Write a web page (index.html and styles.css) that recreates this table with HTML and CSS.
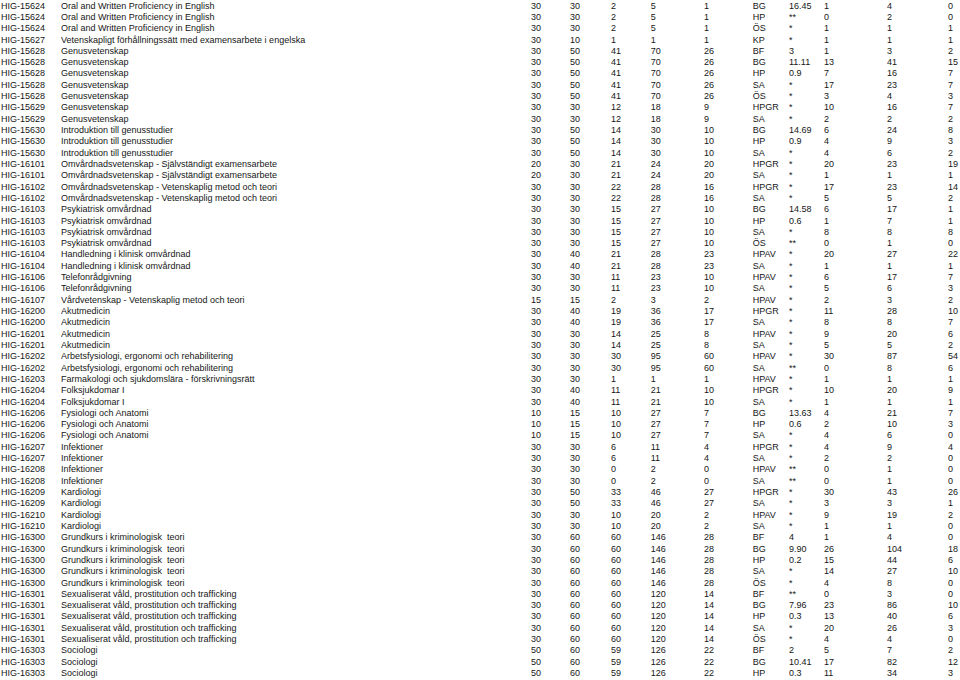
FILE: index.html
```html
<!DOCTYPE html>
<html lang="sv">
<head>
<meta charset="utf-8">
<title>Kursresultat</title>
<link rel="stylesheet" href="styles.css">
</head>
<body>
<table class="grid">
<colgroup>
<col class="c-code"><col class="c-name"><col class="c-n1"><col class="c-n2"><col class="c-n3"><col class="c-n4"><col class="c-n5"><col class="c-grp"><col class="c-val"><col class="c-a"><col class="c-b"><col class="c-c">
</colgroup>
<tbody>
<tr><td>HIG-15624</td><td>Oral and Written Proficiency in English</td><td>30</td><td>30</td><td>2</td><td>5</td><td>1</td><td>BG</td><td>16.45</td><td>1</td><td>4</td><td>0</td></tr>
<tr><td>HIG-15624</td><td>Oral and Written Proficiency in English</td><td>30</td><td>30</td><td>2</td><td>5</td><td>1</td><td>HP</td><td>**</td><td>0</td><td>2</td><td>0</td></tr>
<tr><td>HIG-15624</td><td>Oral and Written Proficiency in English</td><td>30</td><td>30</td><td>2</td><td>5</td><td>1</td><td>ÖS</td><td>*</td><td>1</td><td>1</td><td>1</td></tr>
<tr><td>HIG-15627</td><td>Vetenskapligt förhållningssätt med examensarbete i engelska</td><td>30</td><td>10</td><td>1</td><td>1</td><td>1</td><td>KP</td><td>*</td><td>1</td><td>1</td><td>1</td></tr>
<tr><td>HIG-15628</td><td>Genusvetenskap</td><td>30</td><td>50</td><td>41</td><td>70</td><td>26</td><td>BF</td><td>3</td><td>1</td><td>3</td><td>2</td></tr>
<tr><td>HIG-15628</td><td>Genusvetenskap</td><td>30</td><td>50</td><td>41</td><td>70</td><td>26</td><td>BG</td><td>11.11</td><td>13</td><td>41</td><td>15</td></tr>
<tr><td>HIG-15628</td><td>Genusvetenskap</td><td>30</td><td>50</td><td>41</td><td>70</td><td>26</td><td>HP</td><td>0.9</td><td>7</td><td>16</td><td>7</td></tr>
<tr><td>HIG-15628</td><td>Genusvetenskap</td><td>30</td><td>50</td><td>41</td><td>70</td><td>26</td><td>SA</td><td>*</td><td>17</td><td>23</td><td>7</td></tr>
<tr><td>HIG-15628</td><td>Genusvetenskap</td><td>30</td><td>50</td><td>41</td><td>70</td><td>26</td><td>ÖS</td><td>*</td><td>3</td><td>4</td><td>3</td></tr>
<tr><td>HIG-15629</td><td>Genusvetenskap</td><td>30</td><td>30</td><td>12</td><td>18</td><td>9</td><td>HPGR</td><td>*</td><td>10</td><td>16</td><td>7</td></tr>
<tr><td>HIG-15629</td><td>Genusvetenskap</td><td>30</td><td>30</td><td>12</td><td>18</td><td>9</td><td>SA</td><td>*</td><td>2</td><td>2</td><td>2</td></tr>
<tr><td>HIG-15630</td><td>Introduktion till genusstudier</td><td>30</td><td>50</td><td>14</td><td>30</td><td>10</td><td>BG</td><td>14.69</td><td>6</td><td>24</td><td>8</td></tr>
<tr><td>HIG-15630</td><td>Introduktion till genusstudier</td><td>30</td><td>50</td><td>14</td><td>30</td><td>10</td><td>HP</td><td>0.9</td><td>4</td><td>9</td><td>3</td></tr>
<tr><td>HIG-15630</td><td>Introduktion till genusstudier</td><td>30</td><td>50</td><td>14</td><td>30</td><td>10</td><td>SA</td><td>*</td><td>4</td><td>6</td><td>2</td></tr>
<tr><td>HIG-16101</td><td>Omvårdnadsvetenskap - Självständigt examensarbete</td><td>20</td><td>30</td><td>21</td><td>24</td><td>20</td><td>HPGR</td><td>*</td><td>20</td><td>23</td><td>19</td></tr>
<tr><td>HIG-16101</td><td>Omvårdnadsvetenskap - Självständigt examensarbete</td><td>20</td><td>30</td><td>21</td><td>24</td><td>20</td><td>SA</td><td>*</td><td>1</td><td>1</td><td>1</td></tr>
<tr><td>HIG-16102</td><td>Omvårdnadsvetenskap - Vetenskaplig metod och teori</td><td>30</td><td>30</td><td>22</td><td>28</td><td>16</td><td>HPGR</td><td>*</td><td>17</td><td>23</td><td>14</td></tr>
<tr><td>HIG-16102</td><td>Omvårdnadsvetenskap - Vetenskaplig metod och teori</td><td>30</td><td>30</td><td>22</td><td>28</td><td>16</td><td>SA</td><td>*</td><td>5</td><td>5</td><td>2</td></tr>
<tr><td>HIG-16103</td><td>Psykiatrisk omvårdnad</td><td>30</td><td>30</td><td>15</td><td>27</td><td>10</td><td>BG</td><td>14.58</td><td>6</td><td>17</td><td>1</td></tr>
<tr><td>HIG-16103</td><td>Psykiatrisk omvårdnad</td><td>30</td><td>30</td><td>15</td><td>27</td><td>10</td><td>HP</td><td>0.6</td><td>1</td><td>7</td><td>1</td></tr>
<tr><td>HIG-16103</td><td>Psykiatrisk omvårdnad</td><td>30</td><td>30</td><td>15</td><td>27</td><td>10</td><td>SA</td><td>*</td><td>8</td><td>8</td><td>8</td></tr>
<tr><td>HIG-16103</td><td>Psykiatrisk omvårdnad</td><td>30</td><td>30</td><td>15</td><td>27</td><td>10</td><td>ÖS</td><td>**</td><td>0</td><td>1</td><td>0</td></tr>
<tr><td>HIG-16104</td><td>Handledning i klinisk omvårdnad</td><td>30</td><td>40</td><td>21</td><td>28</td><td>23</td><td>HPAV</td><td>*</td><td>20</td><td>27</td><td>22</td></tr>
<tr><td>HIG-16104</td><td>Handledning i klinisk omvårdnad</td><td>30</td><td>40</td><td>21</td><td>28</td><td>23</td><td>SA</td><td>*</td><td>1</td><td>1</td><td>1</td></tr>
<tr><td>HIG-16106</td><td>Telefonrådgivning</td><td>30</td><td>30</td><td>11</td><td>23</td><td>10</td><td>HPAV</td><td>*</td><td>6</td><td>17</td><td>7</td></tr>
<tr><td>HIG-16106</td><td>Telefonrådgivning</td><td>30</td><td>30</td><td>11</td><td>23</td><td>10</td><td>SA</td><td>*</td><td>5</td><td>6</td><td>3</td></tr>
<tr><td>HIG-16107</td><td>Vårdvetenskap - Vetenskaplig metod och teori</td><td>15</td><td>15</td><td>2</td><td>3</td><td>2</td><td>HPAV</td><td>*</td><td>2</td><td>3</td><td>2</td></tr>
<tr><td>HIG-16200</td><td>Akutmedicin</td><td>30</td><td>40</td><td>19</td><td>36</td><td>17</td><td>HPGR</td><td>*</td><td>11</td><td>28</td><td>10</td></tr>
<tr><td>HIG-16200</td><td>Akutmedicin</td><td>30</td><td>40</td><td>19</td><td>36</td><td>17</td><td>SA</td><td>*</td><td>8</td><td>8</td><td>7</td></tr>
<tr><td>HIG-16201</td><td>Akutmedicin</td><td>30</td><td>30</td><td>14</td><td>25</td><td>8</td><td>HPAV</td><td>*</td><td>9</td><td>20</td><td>6</td></tr>
<tr><td>HIG-16201</td><td>Akutmedicin</td><td>30</td><td>30</td><td>14</td><td>25</td><td>8</td><td>SA</td><td>*</td><td>5</td><td>5</td><td>2</td></tr>
<tr><td>HIG-16202</td><td>Arbetsfysiologi, ergonomi och rehabilitering</td><td>30</td><td>30</td><td>30</td><td>95</td><td>60</td><td>HPAV</td><td>*</td><td>30</td><td>87</td><td>54</td></tr>
<tr><td>HIG-16202</td><td>Arbetsfysiologi, ergonomi och rehabilitering</td><td>30</td><td>30</td><td>30</td><td>95</td><td>60</td><td>SA</td><td>**</td><td>0</td><td>8</td><td>6</td></tr>
<tr><td>HIG-16203</td><td>Farmakologi och sjukdomslära - förskrivningsrätt</td><td>30</td><td>30</td><td>1</td><td>1</td><td>1</td><td>HPAV</td><td>*</td><td>1</td><td>1</td><td>1</td></tr>
<tr><td>HIG-16204</td><td>Folksjukdomar I</td><td>30</td><td>40</td><td>11</td><td>21</td><td>10</td><td>HPGR</td><td>*</td><td>10</td><td>20</td><td>9</td></tr>
<tr><td>HIG-16204</td><td>Folksjukdomar I</td><td>30</td><td>40</td><td>11</td><td>21</td><td>10</td><td>SA</td><td>*</td><td>1</td><td>1</td><td>1</td></tr>
<tr><td>HIG-16206</td><td>Fysiologi och Anatomi</td><td>10</td><td>15</td><td>10</td><td>27</td><td>7</td><td>BG</td><td>13.63</td><td>4</td><td>21</td><td>7</td></tr>
<tr><td>HIG-16206</td><td>Fysiologi och Anatomi</td><td>10</td><td>15</td><td>10</td><td>27</td><td>7</td><td>HP</td><td>0.6</td><td>2</td><td>10</td><td>3</td></tr>
<tr><td>HIG-16206</td><td>Fysiologi och Anatomi</td><td>10</td><td>15</td><td>10</td><td>27</td><td>7</td><td>SA</td><td>*</td><td>4</td><td>6</td><td>0</td></tr>
<tr><td>HIG-16207</td><td>Infektioner</td><td>30</td><td>30</td><td>6</td><td>11</td><td>4</td><td>HPGR</td><td>*</td><td>4</td><td>9</td><td>4</td></tr>
<tr><td>HIG-16207</td><td>Infektioner</td><td>30</td><td>30</td><td>6</td><td>11</td><td>4</td><td>SA</td><td>*</td><td>2</td><td>2</td><td>0</td></tr>
<tr><td>HIG-16208</td><td>Infektioner</td><td>30</td><td>30</td><td>0</td><td>2</td><td>0</td><td>HPAV</td><td>**</td><td>0</td><td>1</td><td>0</td></tr>
<tr><td>HIG-16208</td><td>Infektioner</td><td>30</td><td>30</td><td>0</td><td>2</td><td>0</td><td>SA</td><td>**</td><td>0</td><td>1</td><td>0</td></tr>
<tr><td>HIG-16209</td><td>Kardiologi</td><td>30</td><td>50</td><td>33</td><td>46</td><td>27</td><td>HPGR</td><td>*</td><td>30</td><td>43</td><td>26</td></tr>
<tr><td>HIG-16209</td><td>Kardiologi</td><td>30</td><td>50</td><td>33</td><td>46</td><td>27</td><td>SA</td><td>*</td><td>3</td><td>3</td><td>1</td></tr>
<tr><td>HIG-16210</td><td>Kardiologi</td><td>30</td><td>30</td><td>10</td><td>20</td><td>2</td><td>HPAV</td><td>*</td><td>9</td><td>19</td><td>2</td></tr>
<tr><td>HIG-16210</td><td>Kardiologi</td><td>30</td><td>30</td><td>10</td><td>20</td><td>2</td><td>SA</td><td>*</td><td>1</td><td>1</td><td>0</td></tr>
<tr><td>HIG-16300</td><td>Grundkurs i kriminologisk  teori</td><td>30</td><td>60</td><td>60</td><td>146</td><td>28</td><td>BF</td><td>4</td><td>1</td><td>4</td><td>0</td></tr>
<tr><td>HIG-16300</td><td>Grundkurs i kriminologisk  teori</td><td>30</td><td>60</td><td>60</td><td>146</td><td>28</td><td>BG</td><td>9.90</td><td>26</td><td>104</td><td>18</td></tr>
<tr><td>HIG-16300</td><td>Grundkurs i kriminologisk  teori</td><td>30</td><td>60</td><td>60</td><td>146</td><td>28</td><td>HP</td><td>0.2</td><td>15</td><td>44</td><td>6</td></tr>
<tr><td>HIG-16300</td><td>Grundkurs i kriminologisk  teori</td><td>30</td><td>60</td><td>60</td><td>146</td><td>28</td><td>SA</td><td>*</td><td>14</td><td>27</td><td>10</td></tr>
<tr><td>HIG-16300</td><td>Grundkurs i kriminologisk  teori</td><td>30</td><td>60</td><td>60</td><td>146</td><td>28</td><td>ÖS</td><td>*</td><td>4</td><td>8</td><td>0</td></tr>
<tr><td>HIG-16301</td><td>Sexualiserat våld, prostitution och trafficking</td><td>30</td><td>60</td><td>60</td><td>120</td><td>14</td><td>BF</td><td>**</td><td>0</td><td>3</td><td>0</td></tr>
<tr><td>HIG-16301</td><td>Sexualiserat våld, prostitution och trafficking</td><td>30</td><td>60</td><td>60</td><td>120</td><td>14</td><td>BG</td><td>7.96</td><td>23</td><td>86</td><td>10</td></tr>
<tr><td>HIG-16301</td><td>Sexualiserat våld, prostitution och trafficking</td><td>30</td><td>60</td><td>60</td><td>120</td><td>14</td><td>HP</td><td>0.3</td><td>13</td><td>40</td><td>6</td></tr>
<tr><td>HIG-16301</td><td>Sexualiserat våld, prostitution och trafficking</td><td>30</td><td>60</td><td>60</td><td>120</td><td>14</td><td>SA</td><td>*</td><td>20</td><td>26</td><td>3</td></tr>
<tr><td>HIG-16301</td><td>Sexualiserat våld, prostitution och trafficking</td><td>30</td><td>60</td><td>60</td><td>120</td><td>14</td><td>ÖS</td><td>*</td><td>4</td><td>4</td><td>0</td></tr>
<tr><td>HIG-16303</td><td>Sociologi</td><td>50</td><td>60</td><td>59</td><td>126</td><td>22</td><td>BF</td><td>2</td><td>5</td><td>7</td><td>2</td></tr>
<tr><td>HIG-16303</td><td>Sociologi</td><td>50</td><td>60</td><td>59</td><td>126</td><td>22</td><td>BG</td><td>10.41</td><td>17</td><td>82</td><td>12</td></tr>
<tr><td>HIG-16303</td><td>Sociologi</td><td>50</td><td>60</td><td>59</td><td>126</td><td>22</td><td>HP</td><td>0.3</td><td>11</td><td>34</td><td>3</td></tr>
</tbody>
</table>
</body>
</html>
```
FILE: styles.css
```css
html, body {
  margin: 0;
  padding: 0;
  background: #ffffff;
}

body {
  padding: 0.6px 0 0 1px;
  font-family: "Liberation Sans", Arial, sans-serif;
  font-size: 9px;
  color: #161616;
}

.grid {
  table-layout: fixed;
  width: 959px;
  border-collapse: collapse;
  border-spacing: 0;
}

.grid td {
  padding: 0;
  line-height: 11.32px;
  white-space: pre;
  vertical-align: baseline;
  text-align: left;
  overflow: hidden;
}

.c-code { width: 60px; }
.c-name { width: 470px; }
.c-n1 { width: 39px; }
.c-n2 { width: 41px; }
.c-n3 { width: 39.7px; }
.c-n4 { width: 53.3px; }
.c-n5 { width: 48.7px; }
.c-grp { width: 36.3px; }
.c-val { width: 35px; }
.c-a { width: 63px; }
.c-b { width: 61px; }
.c-c { width: 12px; }
```
